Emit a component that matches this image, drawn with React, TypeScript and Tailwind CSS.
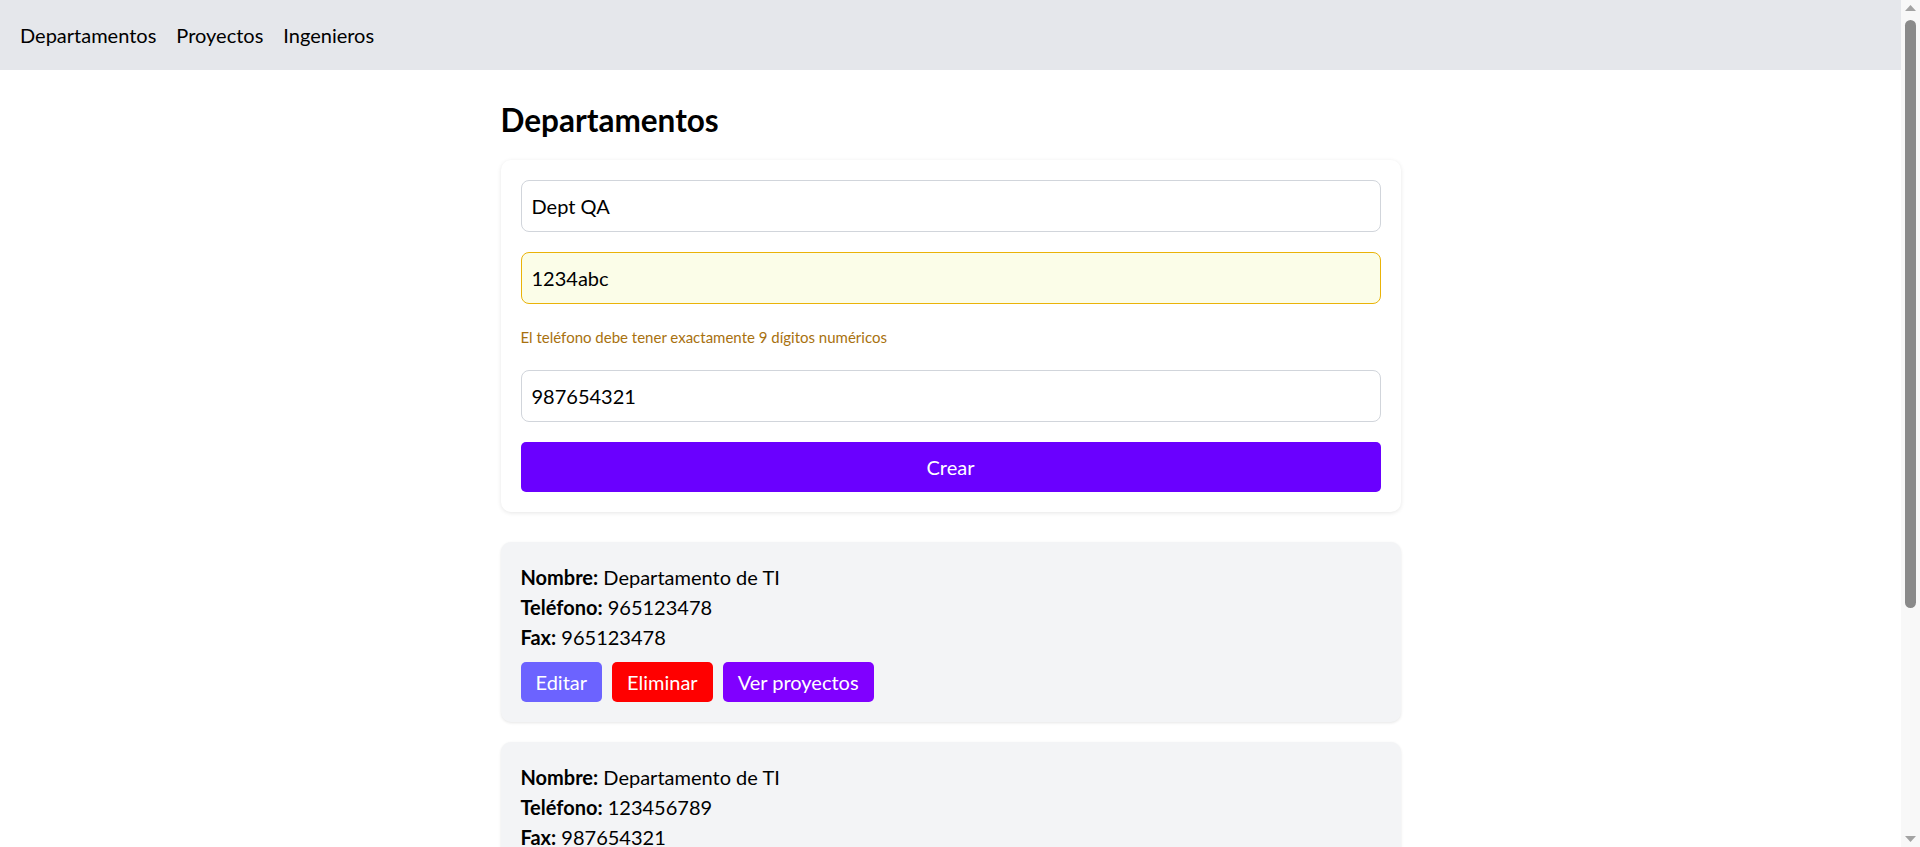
import React from "react";

const depts = [
  { nombre: "Departamento de TI", tel: "965123478", fax: "965123478" },
  { nombre: "Departamento de TI", tel: "123456789", fax: "987654321" },
  { nombre: "Departamento de RRHH", tel: "912345678", fax: "912345679" },
];

export default function App() {
  return (
    <div
      className="min-h-screen bg-white text-black text-[20px] leading-[30px] pr-[19px]"
      style={{ fontFamily: '"Segoe UI", Lato, sans-serif' }}
    >
      <nav className="h-[70px] bg-[#e5e7eb] flex items-center gap-[20px] pl-5">
        <a className="text-[20px]">Departamentos</a>
        <a className="text-[20px]">Proyectos</a>
        <a className="text-[20px]">Ingenieros</a>
      </nav>
      <main className="max-w-[960px] mx-auto p-[30px]">
        <h2 className="text-[31.5px] leading-[40px] font-bold mb-5">Departamentos</h2>
        <div className="bg-white rounded-[10px] shadow-[0_1px_4px_rgba(0,0,0,0.1)] p-5 flex flex-col gap-5 mb-[30px]">
          <input
            className="h-[52px] border border-[#d1d5db] rounded-[8px] px-[10px] text-[20px] outline-none"
            defaultValue="Dept QA"
          />
          <input
            className="h-[52px] border border-[#eab308] bg-[#fbfde8] rounded-[8px] px-[10px] text-[20px] outline-none"
            defaultValue="1234abc"
          />
          <p className="text-[15px] leading-[26px] text-[#a8710f]">
            El teléfono debe tener exactamente 9 dígitos numéricos
          </p>
          <input
            className="h-[52px] border border-[#d1d5db] rounded-[8px] px-[10px] text-[20px] outline-none"
            defaultValue="987654321"
          />
          <button className="h-[50px] bg-[#6a00ff] text-white rounded-[5px] text-[20px]">Crear</button>
        </div>
        <div className="flex flex-col gap-5">
          {depts.map((d, i) => (
            <div key={i} className="bg-[#f3f4f6] rounded-[10px] shadow-[0_1px_3px_rgba(0,0,0,0.1)] p-5">
              <p>
                <strong>Nombre:</strong> {d.nombre}
              </p>
              <p>
                <strong>Teléfono:</strong> {d.tel}
              </p>
              <p>
                <strong>Fax:</strong> {d.fax}
              </p>
              <div className="flex gap-[10px] mt-[10px]">
                <button className="h-10 px-[15px] rounded-[5px] bg-[#6c63ff] text-white">Editar</button>
                <button className="h-10 px-[15px] rounded-[5px] bg-[#ff0000] text-white">Eliminar</button>
                <button className="h-10 px-[15px] rounded-[5px] bg-[#8000ff] text-white">Ver proyectos</button>
              </div>
            </div>
          ))}
        </div>
      </main>
      <div className="fixed top-0 right-0 h-screen w-[19px] bg-[#f8f8f8] flex flex-col items-center">
        <svg width="19" height="14" viewBox="0 0 19 14" className="shrink-0">
          <polygon points="4,11 9.5,5 15,11" fill="#a3a3a3" />
        </svg>
        <div className="w-[11px] mt-[6px] h-[588px] rounded-full bg-[#8a8a8a]" />
        <div className="flex-1" />
        <svg width="19" height="14" viewBox="0 0 19 14" className="shrink-0">
          <polygon points="4,3 9.5,9 15,3" fill="#a3a3a3" />
        </svg>
      </div>
    </div>
  );
}
